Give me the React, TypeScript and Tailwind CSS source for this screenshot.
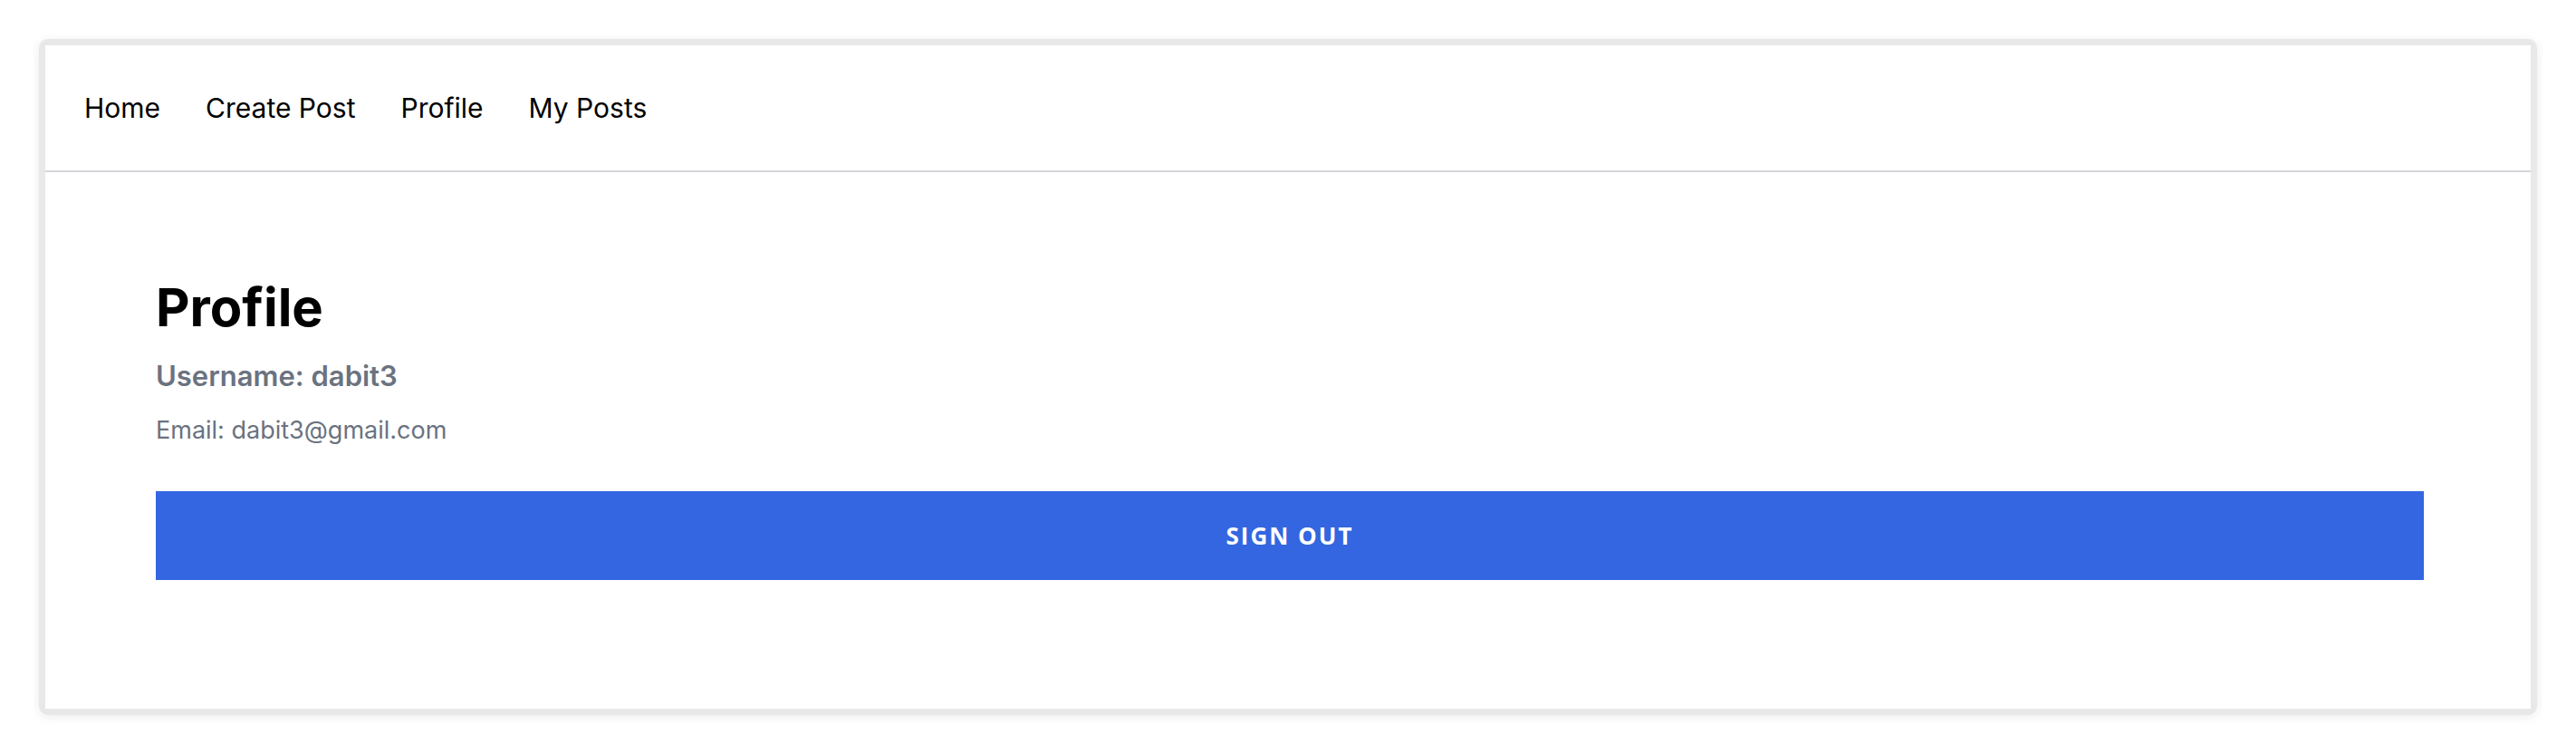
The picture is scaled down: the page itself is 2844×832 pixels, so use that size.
export default function App() {
  const links = ["Home", "Create Post", "Profile", "My Posts"];
  return (
    <div className="min-h-[832px] w-full bg-white p-[43px] font-['Inter',sans-serif]">
      <div className="rounded-[10px] bg-[#e8e8e8] p-[7px] shadow-[0_2px_12px_rgba(0,0,0,0.08)]">
        <div className="flex h-[732px] flex-col bg-white">
          <nav className="flex h-[140px] items-center border-b-2 border-[#d4d6db] pl-[43px] text-[30px] text-black">
            {links.map((l) => (
              <a key={l} className="mr-[50px] leading-none" href="#">
                {l}
              </a>
            ))}
          </nav>
          <main className="flex flex-col pl-[122px] pr-[118px] pt-[114px]">
            <h1 className="text-[58px] font-bold leading-[70px] text-black">Profile</h1>
            <h3 className="mt-[20px] text-[31px] font-semibold leading-[42px] text-[#6b7280]">
              Username: dabit3
            </h3>
            <p className="mt-[22px] text-[27px] leading-[34px] text-[#6b7280]">
              Email: dabit3@gmail.com
            </p>
            <button className="mt-[50px] flex h-[98px] w-full items-center justify-center bg-[#3366e0] font-['Open_Sans',sans-serif] text-[26px] font-bold tracking-[2px] text-white">
              SIGN OUT
            </button>
          </main>
        </div>
      </div>
    </div>
  );
}
